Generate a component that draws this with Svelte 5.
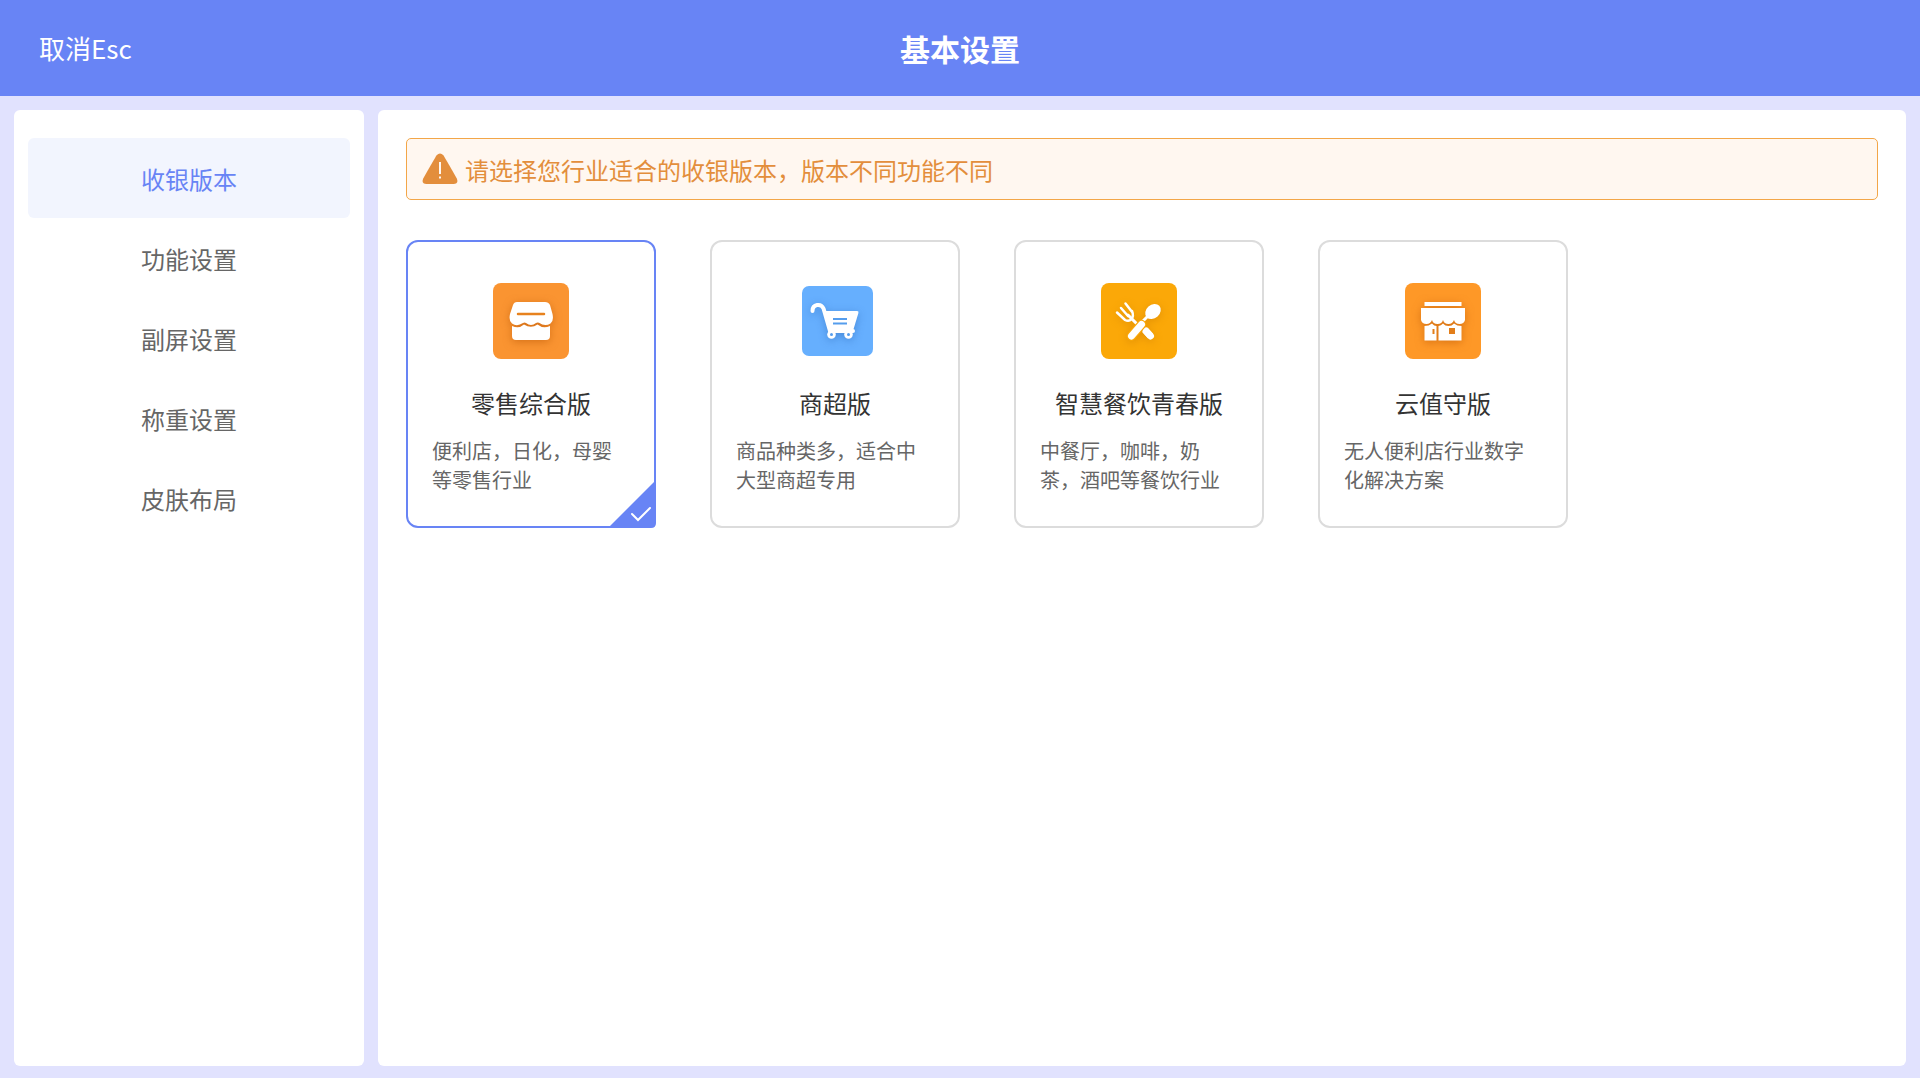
<script lang="ts">
	interface Version {
		id: string;
		name: string;
		desc: string;
	}

	const menus = ['收银版本', '功能设置', '副屏设置', '称重设置', '皮肤布局'];

	const versions: Version[] = [
		{ id: 'retail', name: '零售综合版', desc: '便利店，日化，母婴等零售行业' },
		{ id: 'market', name: '商超版', desc: '商品种类多，适合中大型商超专用' },
		{ id: 'catering', name: '智慧餐饮青春版', desc: '中餐厅，咖啡，奶茶，酒吧等餐饮行业' },
		{ id: 'cloud', name: '云值守版', desc: '无人便利店行业数字化解决方案' }
	];

	let activeMenu = $state('收银版本');
	let selected = $state('retail');
</script>

<div class="page">
	<header>
		<button class="cancel">取消Esc</button>
		<h1>基本设置</h1>
	</header>

	<div class="content">
		<nav>
			{#each menus as menu}
				<button class:active={activeMenu === menu} onclick={() => (activeMenu = menu)}>
					{menu}
				</button>
			{/each}
		</nav>

		<main>
			<div class="notice">
				<svg width="36" height="32" viewBox="0 0 36 32" aria-hidden="true">
					<path
						d="M14.6 2.2Q18-1.4 21.4 2.2Q22 3 34.8 25.4Q37 31 31.4 31H4.6Q-1 31 1.2 25.4Q14 3 14.6 2.2Z"
						fill="#e38e3c"
					/>
					<path d="M18 9v12M18 23.5v2" stroke="#fff7f0" stroke-width="2" />
				</svg>
				<span>请选择您行业适合的收银版本，版本不同功能不同</span>
			</div>

			<div class="cards">
				{#each versions as v (v.id)}
					<button
						class="card"
						class:selected={selected === v.id}
						aria-pressed={selected === v.id}
						onclick={() => (selected = v.id)}
					>
						<svg class="icon" viewBox="0 0 76 76" aria-hidden="true">
							{#if v.id === 'retail'}
								<rect width="76" height="76" rx="8" fill="#fa9431" />
								<g class="shape orange">
									<path
										d="M24 19H52Q55.500 19 57 22L59.500 31Q61 38 57.500 40.500Q52 44 46 39.800Q44.500 39 43 40Q38 44 33 40Q31.500 39 30 40Q24 44 19 40.500Q15.500 38 17 31L20 22Q21 19 24 19Z"
									/>
									<path
										d="M19 43Q26 46 31 41.500Q38 46 44.500 41.500Q50 46 57 43V53Q57 57 53 57H23Q19 57 19 53Z"
									/>
								</g>
								<path d="M25 31H51" stroke="#e7821e" stroke-width="2.500" stroke-linecap="round" />
							{:else if v.id === 'market'}
								<rect x="5" y="3" width="71" height="70" rx="7" fill="#66affe" />
								<g class="shape blue">
									<path
										d="M15.500 28C15.500 21 24 20 26.500 25.500L33 48H56"
										fill="none"
										stroke="#fff"
										stroke-width="4"
										stroke-linecap="round"
									/>
									<path d="M28 28H60Q62 28 61.400 30L56 48Q55.500 49 54 49H33Z" />
									<circle cx="34.500" cy="51.500" r="4.300" />
									<circle cx="51.500" cy="51.500" r="4.300" />
								</g>
								<path d="M36 36H50M36 40.500H50" stroke="#559ded" stroke-width="2" />
								<circle cx="34.500" cy="51.500" r="1.500" fill="#559ded" />
								<circle cx="51.500" cy="51.500" r="1.500" fill="#559ded" />
							{:else if v.id === 'catering'}
								<rect width="76" height="76" rx="8" fill="#fba808" />
								<g class="amber" fill="none" stroke="#fff" stroke-linecap="round">
									<path
										d="M24.500 20.500L31.500 29.500M20 25L27 33M16 29.500L24 37Q28 39 30.500 36Q33 33 31 28"
										stroke-width="2.500"
									/>
									<path d="M27 32L36 41" stroke-width="3" />
									<path d="M44 47L49.500 53" stroke-width="7" stroke-linecap="butt" />
									<path d="M45 48L49.500 53" stroke-width="7" />
									<path d="M41 39L48 32" stroke-width="3" />
									<path d="M40.500 41.500L30.500 53" stroke="#fba808" stroke-width="9.500" />
									<path d="M40.500 41.500L30.500 53" stroke-width="7" />
									<ellipse
										cx="52"
										cy="28.500"
										rx="8.500"
										ry="6.800"
										transform="rotate(-42 52 28.500)"
										fill="#fff"
										stroke="none"
									/>
								</g>
							{:else}
								<rect width="76" height="76" rx="8" fill="#fe9827" />
								<g class="shape orange">
									<path d="M19.500 19H56.500V23H19.500Z" />
									<path
										d="M16 25H60V37Q59 41 54.500 41Q50 41 49 37Q47.500 41 43.500 41Q39 41 38 37Q37 41 32.500 41Q28 41 27 37Q25.500 41 21.500 41Q17 41 16 37Z"
									/>
									<path
										d="M19.500 43Q24 43 27 40.500Q29 43 31.500 43V57.500H19.500ZM33.500 43Q36 42.500 38 40.500Q40 43 43.500 43Q47 43 49 40.500Q52 43 56.500 43V57.500H33.500Z"
									/>
								</g>
								<path d="M28.500 46V51" stroke="#e27e1a" stroke-width="2" />
								<rect x="44" y="45" width="6" height="6" fill="#e27e1a" />
							{/if}
						</svg>
						<span class="name">{v.name}</span>
						<span class="desc">{v.desc}</span>
						{#if selected === v.id}
							<svg class="mark" viewBox="0 0 48 48" aria-hidden="true">
								<path d="M48 0V43Q48 48 43 48H0Z" fill="#6884f5" />
								<path
									d="M24 34L30 40L42 28"
									fill="none"
									stroke="#fff"
									stroke-width="2"
									stroke-linecap="round"
								/>
							</svg>
						{/if}
					</button>
				{/each}
			</div>
		</main>
	</div>
</div>

<style>
	:global(body) {
		margin: 0;
	}

	.page {
		display: flex;
		flex-direction: column;
		min-height: 100vh;
		background: #e1e2fe;
		font-family: 'Noto Sans CJK SC', sans-serif;
	}

	button {
		padding: 0;
		border: none;
		background: none;
		font-family: inherit;
		cursor: pointer;
	}

	header {
		display: grid;
		grid-template-columns: 1fr auto 1fr;
		align-items: center;
		height: 96px;
		padding: 0 39px;
		background: #6884f5;
		color: #fff;
	}

	.cancel {
		justify-self: start;
		color: #fff;
		font-size: 26px;
		line-height: 40px;
	}

	h1 {
		margin: 0;
		font-size: 30px;
		font-weight: 700;
		line-height: 44px;
	}

	.content {
		flex: 1;
		display: flex;
		gap: 14px;
		padding: 14px 14px 12px;
	}

	nav {
		display: flex;
		flex-direction: column;
		flex: 0 0 350px;
		box-sizing: border-box;
		padding: 28px 14px;
		border-radius: 6px;
		background: #fff;
	}

	nav button {
		height: 80px;
		border-radius: 6px;
		color: #666;
		font-size: 24px;
	}

	nav button.active {
		background: #f2f5fe;
		color: #6884f5;
	}

	main {
		flex: 1;
		padding: 28px;
		border-radius: 6px;
		background: #fff;
	}

	.notice {
		display: flex;
		align-items: center;
		gap: 7px;
		height: 60px;
		padding: 0 15px;
		border: 1px solid #f3a648;
		border-radius: 5px;
		background: #fff7f0;
		color: #e38e3c;
		font-size: 24px;
	}

	.cards {
		display: flex;
		flex-wrap: wrap;
		gap: 54px;
		margin-top: 40px;
	}

	.card {
		position: relative;
		display: flex;
		flex-direction: column;
		align-items: center;
		box-sizing: border-box;
		width: 250px;
		min-height: 288px;
		padding: 41px 24px 32px;
		border: 2px solid #dcdcdc;
		border-radius: 12px;
	}

	.card.selected {
		border-color: #6884f5;
	}

	.icon {
		width: 76px;
		height: 76px;
	}

	.shape {
		fill: #fff;
	}

	.amber {
		filter: drop-shadow(0 2px 4px rgba(190, 110, 0, 0.4));
	}

	.orange {
		filter: drop-shadow(0 2px 4px rgba(180, 80, 0, 0.5));
	}

	.blue {
		filter: drop-shadow(0 2px 4px rgba(30, 90, 170, 0.4));
	}

	.name {
		margin-top: 26px;
		color: #333;
		font-size: 24px;
		line-height: 36px;
		white-space: nowrap;
	}

	.desc {
		align-self: stretch;
		margin-top: 15px;
		color: #666;
		font-size: 20px;
		line-height: 29px;
		text-align: left;
	}

	.mark {
		position: absolute;
		right: -2px;
		bottom: -2px;
		width: 48px;
		height: 48px;
	}
</style>
